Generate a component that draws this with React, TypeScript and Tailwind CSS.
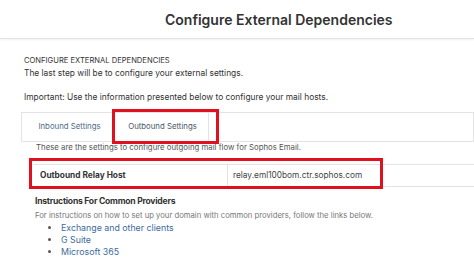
import React from 'react';

const links = ['Exchange and other clients', 'G Suite', 'Microsoft 365'];

const App: React.FC = () => {
  return (
    <div className="relative w-[474px] h-[265px] overflow-hidden bg-white text-[#333] font-['Inter',_'Liberation_Sans',_sans-serif]">
      <header className="h-[39px] border-b border-[#e4e4e4] shadow-[0_1px_2px_rgba(0,0,0,0.06)] flex items-center pl-[165px]">
        <h1 className="text-[14px] font-semibold text-[#333] whitespace-nowrap">Configure External Dependencies</h1>
      </header>

      <section className="pt-[16px]">
        <div className="pl-[24px] text-[8.4px] leading-[12px] text-[#333] whitespace-nowrap">
          <p className="uppercase text-[7.6px]">Configure External Dependencies</p>
          <p>The last step will be to configure your external settings.</p>
          <p className="mt-[12px]">Important: Use the information presented below to configure your mail hosts.</p>
        </div>

        <div className="ml-[21px] mt-[9px] h-[30px] border border-[#e3e3e3] flex text-[7.8px] text-[#4f6b8a] whitespace-nowrap">
          <div className="w-[95px] flex items-center justify-center">Inbound Settings</div>
          <div className="w-[92px] flex items-center justify-center border-r border-[#e3e3e3] text-[#4a5868]">Outbound Settings</div>
        </div>

        <p className="pl-[36px] text-[7.8px] leading-[11px] text-[#555] whitespace-nowrap">These are the settings to configure outgoing mail flow for Sophos Email.</p>

        <div className="ml-[33px] mt-[11px] h-[23px] border-y border-[#e3e3e3] flex items-center text-[8.3px] whitespace-nowrap">
          <div className="w-[195px] pl-[7px] font-bold text-[#333] h-full flex items-center border-r border-[#e3e3e3]">Outbound Relay Host</div>
          <div className="pl-[5px] text-[#444]">relay.eml100bom.ctr.sophos.com</div>
        </div>

        <div className="pl-[35px] mt-[8px] whitespace-nowrap">
          <h2 className="text-[8.6px] font-bold leading-[12px] tracking-[-0.25px] text-[#333]">Instructions For Common Providers</h2>
          <p className="mt-[3px] text-[7.7px] leading-[12px] text-[#777]">For instructions on how to set up your domain with common providers, follow the links below.</p>
          <ul className="pl-[26px] list-disc text-[8.8px] leading-[12px] text-[#3d6aa0] marker:text-[#555]">
            {links.map((l) => (
              <li key={l}>{l}</li>
            ))}
          </ul>
        </div>
      </section>

      {/* red annotation boxes */}
      <div className="absolute left-[112px] top-[109px] w-[107px] h-[35px] border-[3px] border-[#e0101e]" />
      <div className="absolute left-[29px] top-[158px] w-[354px] h-[31px] border-[3px] border-[#e0101e]" />
    </div>
  );
};

export default App;
